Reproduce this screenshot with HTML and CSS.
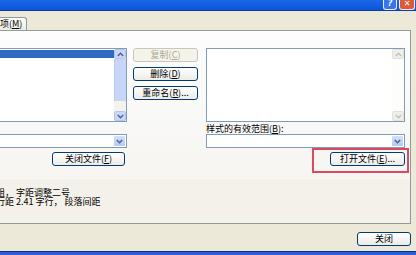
FILE: index.html
```html
<!DOCTYPE html>
<html lang="zh-CN">
<head>
  <meta charset="UTF-8">
  <meta name="viewport" content="width=device-width, initial-scale=1.0">
  <title>管理器</title>
  <link rel="stylesheet" href="styles.css">
</head>
<body>
  <div class="window">
    <!-- Barra del titolo -->
    <div class="titlebar">
      <span class="caption-btn help">?</span>
      <span class="caption-btn close">✕</span>
    </div>

    <div class="dialog">
      <!-- Schede -->
      <div class="tabs">
        <div class="tab">宏方案项(<u>M</u>)</div>
      </div>

      <!-- Pagina della scheda -->
      <div class="panel">
        <div class="lists">
          <div class="col left">
            <div class="listbox">
              <div class="list-items">
                <div class="item selected"></div>
              </div>
              <div class="scrollbar">
                <span class="arrow"><svg width="7" height="5"><path d="M0.8 4 L3.5 1.2 L6.2 4" stroke="#4d6185" stroke-width="1.4" fill="none"/></svg></span>
                <span class="thumb"></span>
                <span class="track"></span>
                <span class="arrow"><svg width="7" height="5"><path d="M0.8 1 L3.5 3.8 L6.2 1" stroke="#4d6185" stroke-width="1.4" fill="none"/></svg></span>
              </div>
            </div>
            <div class="label">:</div>
            <div class="combo">
              <span class="drop"><svg width="7" height="5"><path d="M0.8 1 L3.5 3.8 L6.2 1" stroke="#4d6185" stroke-width="1.4" fill="none"/></svg></span>
            </div>
            <div class="btn-row">
              <button class="btn file-btn">关闭文件(<u>F</u>)</button>
            </div>
          </div>

          <div class="col mid">
            <button class="btn" disabled>复制(<u>C</u>)</button>
            <button class="btn">删除(<u>D</u>)</button>
            <button class="btn">重命名(<u>R</u>)...</button>
          </div>

          <div class="col right">
            <div class="listbox">
              <div class="list-items"></div>
              <div class="scrollbar off">
                <span class="arrow"><svg width="7" height="5"><path d="M0.8 4 L3.5 1.2 L6.2 4" stroke="#c3c1b5" stroke-width="1.4" fill="none"/></svg></span>
                <span class="track"></span>
                <span class="arrow"><svg width="7" height="5"><path d="M0.8 1 L3.5 3.8 L6.2 1" stroke="#c3c1b5" stroke-width="1.4" fill="none"/></svg></span>
              </div>
            </div>
            <div class="label">样式的有效范围(<u>B</u>):</div>
            <div class="combo">
              <span class="drop"><svg width="7" height="5"><path d="M0.8 1 L3.5 3.8 L6.2 1" stroke="#4d6185" stroke-width="1.4" fill="none"/></svg></span>
            </div>
            <div class="btn-row">
              <button class="btn open-btn">打开文件(<u>E</u>)...</button>
            </div>
          </div>
        </div>

        <!-- Descrizione dello stile -->
        <div class="desc">
          <div class="desc-line">加粗， 字距调整二号</div>
          <div class="desc-line">倍行距 2.41 字行， 段落间距</div>
        </div>
      </div>

      <div class="footer">
        <button class="btn close-btn">关闭</button>
      </div>
    </div>

    <div class="frame-bottom"></div>
  </div>

  <!-- Riquadro rosso di evidenziazione -->
  <div class="highlight"></div>
</body>
</html>
```

FILE: styles.css
```css
/* Stile generale */
body {
  margin: 0;
  width: 416px;
  height: 255px;
  overflow: hidden;
  position: relative;
  background: #ece9d8;
  font-family: "Noto Sans CJK SC", "Liberation Sans", sans-serif;
  font-size: 9px;
  color: #000;
}

u {
  text-decoration: underline;
  text-underline-offset: 1px;
}

.window {
  margin-left: -14px;
  width: 430px;
}

/* Barra del titolo */
.titlebar {
  height: 10px;
  display: flex;
  justify-content: flex-end;
  align-items: flex-start;
  gap: 2px;
  padding-right: 1px;
  background: linear-gradient(#1a66e8, #0c55da);
  border-bottom: 1px solid #0a3da6;
}

.caption-btn {
  height: 9px;
  color: #fff;
  font-family: "DejaVu Sans", sans-serif;
  font-size: 8px;
  font-weight: bold;
  line-height: 8px;
  text-align: center;
  border: 1px solid #e8eefc;
  border-top: none;
  border-radius: 0 0 3px 3px;
}

.help {
  width: 12px;
  background: #3a74ea;
  font-style: italic;
}

.close {
  width: 14px;
  background: #de5a36;
}

/* Schede */
.dialog {
  padding-top: 6px;
  background: #ece9d8;
}

.tabs {
  display: flex;
  height: 13px;
}

.tab {
  margin-left: -18px;
  height: 12px;
  padding: 0 4px;
  line-height: 12px;
  border: 1px solid #919b9c;
  border-bottom: none;
  border-radius: 3px 3px 0 0;
  background: linear-gradient(#ffffff, #ecebe6);
}

.panel {
  margin-right: 5px;
  padding: 17px 4px 0 5px;
  border: 1px solid #919b9c;
  background: linear-gradient(#fdfdfe, #f4f3ee);
}

.lists {
  display: flex;
  height: 118px;
}

.col {
  display: flex;
  flex-direction: column;
}

.col.left {
  width: 135px;
}

.col.mid {
  width: 65px;
  margin-left: 6px;
  gap: 5px;
}

.col.right {
  width: 199px;
  margin-left: 8px;
}

/* Elenchi */
.listbox {
  height: 72px;
  display: flex;
  border: 1px solid #7f9db9;
  background: #fff;
}

.list-items {
  flex: 1;
  padding-top: 1px;
}

.item.selected {
  height: 8px;
  background: #316ac5;
}

.scrollbar {
  width: 12px;
  display: flex;
  flex-direction: column;
  background: #f3f2ec;
}

.scrollbar .arrow {
  height: 10px;
  display: flex;
  align-items: center;
  justify-content: center;
  background: #c8d7fa;
  border: 1px solid #b4c6ef;
  border-radius: 2px;
  box-sizing: border-box;
}

.scrollbar .thumb {
  height: 42px;
  background: #c6d5f8;
  border-left: 1px solid #b9cbf3;
}

.scrollbar .track {
  flex: 1;
}

.scrollbar.off {
  background: #fdfdfc;
}

.scrollbar.off .arrow {
  background: #efeee8;
  border-color: #e4e2d8;
}

.label {
  height: 11px;
  margin-top: 1px;
  line-height: 11px;
  white-space: nowrap;
}

.combo {
  height: 12px;
  display: flex;
  justify-content: flex-end;
  border: 1px solid #7f9db9;
  background: #fff;
}

.drop {
  width: 11px;
  margin: 1px;
  display: flex;
  align-items: center;
  justify-content: center;
  background: linear-gradient(#d3e0fd, #b5c9f6);
  border-radius: 1px;
}

.btn-row {
  display: flex;
  justify-content: flex-end;
  margin-top: 4px;
}

/* Pulsanti */
.btn {
  height: 14px;
  padding: 0;
  font-family: "Noto Sans CJK SC", "Liberation Sans", sans-serif;
  font-size: 9px;
  line-height: 12px;
  color: #000;
  border: 1px solid #003c74;
  border-radius: 3px;
  background: linear-gradient(#ffffff, #ecebe6);
}

.btn:disabled {
  color: #aca899;
  border-color: #c9c7ba;
  background: #f5f4ea;
}

.file-btn {
  width: 73px;
  margin-right: 2px;
}

.open-btn {
  width: 75px;
}

.close-btn {
  width: 54px;
}

/* Descrizione */
.desc {
  height: 35px;
  margin: 12px -4px 0 -5px;
  padding-top: 9px;
  white-space: nowrap;
  border-top: 1px solid #fafaf7;
  background: #f3f1ea;
}

.desc-line {
  height: 9px;
  line-height: 9px;
  overflow: visible;
}

.footer {
  height: 19px;
  display: flex;
  justify-content: flex-end;
  padding: 8px 5px 0 0;
}

.frame-bottom {
  height: 5px;
  background: #2a5fd8;
  border-top: 1px solid #0d2c8c;
}

/* Evidenziazione */
.highlight {
  position: absolute;
  left: 312px;
  top: 148px;
  width: 93px;
  height: 21px;
  border: 2px solid #dc4a62;
}
```
